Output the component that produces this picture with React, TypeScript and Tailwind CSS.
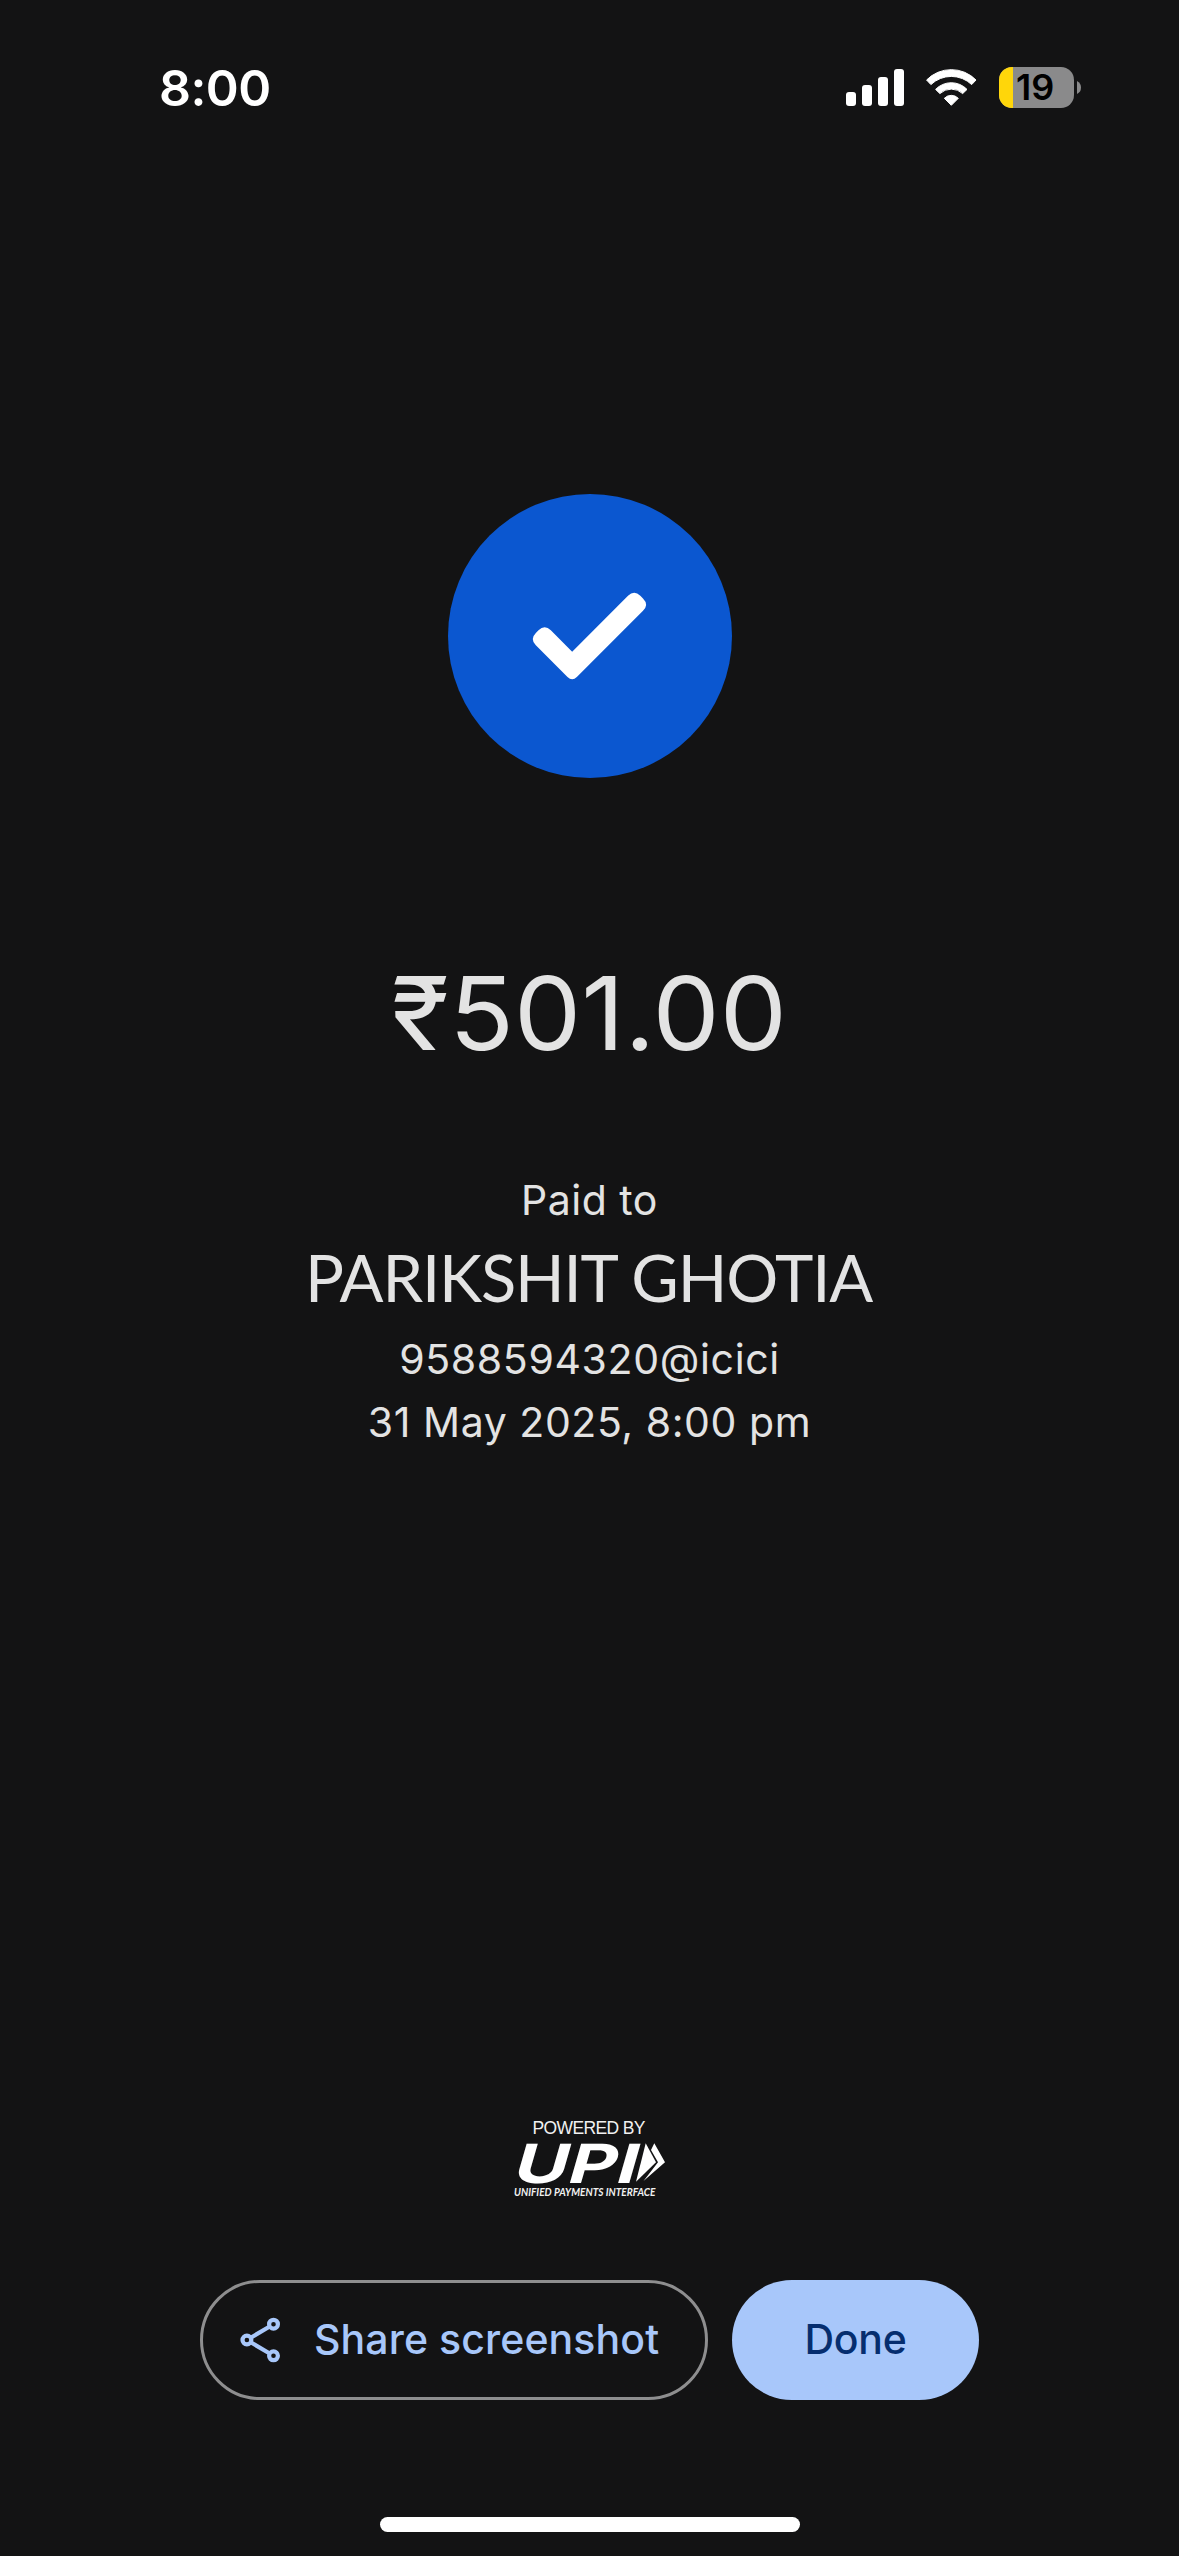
function StatusBar() {
  return (
    <header className="flex h-[175px] items-center pl-[159px] pr-[98px]">
      <time className="pt-px font-[Inter,sans-serif] text-[50px] font-semibold leading-[60px] tracking-[-0.6px] text-white">8:00</time>
      <div className="ml-auto flex items-center">
        <SignalIcon />
        <WifiIcon />
        <Battery level={19} />
      </div>
    </header>
  );
}

function SignalIcon() {
  return (
    <div className="flex h-[37px] items-end gap-[6px]">
      <span className="h-[14px] w-[10px] rounded-[3px] bg-white" />
      <span className="h-[21px] w-[10px] rounded-[3px] bg-white" />
      <span className="h-[29px] w-[10px] rounded-[3px] bg-white" />
      <span className="h-[37px] w-[10px] rounded-[3px] bg-white" />
    </div>
  );
}

function WifiIcon() {
  return (
    <svg className="ml-[21px] h-[37px] w-[53px]" viewBox="925 69 53 37" fill="#fff" stroke="#fff" strokeWidth="1" strokeLinejoin="round">
      <path d="M926.6 80A34.6 34.6 0 0 1 976 80L971.7 84.600A29.5 29.5 0 0 0 930.9 84.600Z" />
      <path d="M935.6 89.4A21.8 21.8 0 0 1 967 89.4L962.7 93.6A16.7 16.7 0 0 0 939.9 93.6Z" />
      <path d="M944.3 98.3A9.8 9.8 0 0 1 958.3 98.3L951.3 105.3Z" />
    </svg>
  );
}

function Battery({ level }: { level: number }) {
  return (
    <div className="ml-[21px] flex items-center gap-[3px]">
      <div className="flex h-[41px] w-[75px] items-center rounded-[13px] bg-[#8a8a8b]">
        <span className="h-full w-[14px] shrink-0 rounded-l-[13px] bg-[#ffd60a]" />
        <span className="ml-[3px] font-[Inter,sans-serif] text-[36px] font-semibold leading-[41px] text-black">{level}</span>
      </div>
      <svg className="h-[13px] w-[4px]" viewBox="0 0 4 13" fill="#8a8a8b">
        <path d="M0 0Q4 2 4 6.500Q4 11 0 13Z" />
      </svg>
    </div>
  );
}

function SuccessBadge() {
  return (
    <div className="mt-[319px] size-[284px] rounded-full bg-[#0b57d0]">
      <svg className="size-full" viewBox="52.5 42 852 852" fill="#fff">
        <path d="M425 515L361 451Q342.500 432.500 324 451L316 459Q297.500 477.500 316 496L411 591Q425 605 439 591L637.500 392.500Q656 374 637.500 355.500L629.500 347.500Q611 329 592.500 347.500Z" />
      </svg>
    </div>
  );
}

function UpiLogo() {
  return (
    <svg className="mt-[666px] h-[82px] w-[156px] overflow-visible" viewBox="0 0 156 82" fill="#fff">
      <text x="20.5" y="16.200" fontFamily="Liberation Sans, sans-serif" fontSize="17.5" textLength="113" lengthAdjust="spacing" fill="#f1f1f1">POWERED BY</text>
      <g transform="translate(0 64.5) skewX(-16)">
        <text x="-1.5" y="0" fontFamily="Inter, sans-serif" fontWeight="650" fontSize="54" textLength="123.500" lengthAdjust="spacingAndGlyphs">UPI</text>
      </g>
      <path d="M133.700 25.300L144 44.300L124 63.700Z" />
      <path d="M142.300 25.300L153 44.300L131.500 63L135 58.500L146 44.300L139 32Z" />
      <text x="2" y="77.700" fontFamily="Lato, sans-serif" fontStyle="italic" fontWeight="700" fontSize="10.8" textLength="141.5" lengthAdjust="spacingAndGlyphs" fill="#f1f1f1">UNIFIED PAYMENTS INTERFACE</text>
    </svg>
  );
}

function ShareIcon() {
  return (
    <svg className="size-[48px] w-[40px]" viewBox="240 2316 40 48" fill="none" stroke="#a8c7fa" strokeWidth="4.2">
      <circle cx="246.900" cy="2340" r="4.400" />
      <circle cx="273.500" cy="2324.200" r="4.400" />
      <circle cx="273.500" cy="2355.800" r="4.400" />
      <path d="M250.700 2337.700L269.700 2326.500M250.700 2342.300L269.700 2353.500" />
    </svg>
  );
}

export default function App() {
  return (
    <div className="h-[2556px] w-[1179px] overflow-hidden bg-[#131314] font-[Inter,sans-serif] text-[#e3e3e3]">
      <StatusBar />
      <main className="flex flex-col items-center whitespace-nowrap">
        <SuccessBadge />
        <h1 className="mt-[175px] scale-x-[1.045] text-[102px] font-normal leading-[120px]">₹501.00</h1>
        <p className="mt-[97px] text-[41px] leading-[60px] tracking-[0.5px]">Paid to</p>
        <h2 className="mt-[7px] pr-[2px] font-[Lato,sans-serif] text-[65px] font-normal leading-[80px] tracking-[-1.15px]">PARIKSHIT GHOTIA</h2>
        <p className="mt-[12px] text-[41px] leading-[60px] tracking-[0.65px]">9588594320@icici</p>
        <p className="mt-[3px] text-[41px] leading-[60px] tracking-[0.56px]">31 May 2025, 8:00 pm</p>
        <UpiLogo />
        <div className="mt-[80px] flex gap-[24px]">
          <button className="flex h-[120px] w-[508px] items-center gap-[34px] rounded-full border-[3px] border-[#8e8e8f] pl-[37px] text-[41px] font-medium tracking-[0.1px] text-[#a8c7fa]">
            <ShareIcon />
            <span>Share screenshot</span>
          </button>
          <button className="h-[120px] w-[247px] rounded-full bg-[#a8c7fa] text-[41px] font-medium tracking-[-0.3px] text-[#062e6f]">Done</button>
        </div>
        <div className="mt-[117px] h-[15px] w-[420px] rounded-full bg-white" />
      </main>
    </div>
  );
}
